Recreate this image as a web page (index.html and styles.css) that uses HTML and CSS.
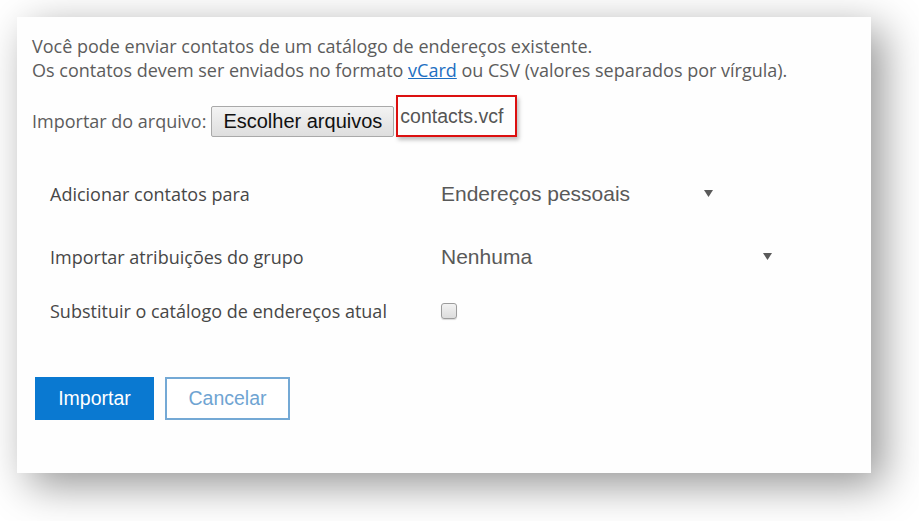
FILE: index.html
```html
<!DOCTYPE html>
<html lang="pt">
<head>
<meta charset="utf-8">
<title>Importar contatos</title>
<link rel="stylesheet" href="styles.css">
</head>
<body>
<div class="card">
  <p class="intro">Você pode enviar contatos de um catálogo de endereços existente.<br>Os contatos devem ser enviados no formato <a href="#" class="link">vCard</a> ou CSV (valores separados por vírgula).</p>
  <div class="file-row">
    <span class="file-label">Importar do arquivo:</span>
    <button class="file-btn" type="button">Escolher arquivos</button>
    <span class="file-name">contacts.vcf</span>
  </div>
  <div class="form">
    <div class="form-row row-first">
      <span class="label">Adicionar contatos para</span>
      <div class="select select-a"><span>Endereços pessoais</span><svg class="arrow" width="9" height="7" viewBox="0 0 9 7"><path d="M0 0H9L4.5 7Z" fill="#5a5a5a"/></svg></div>
    </div>
    <div class="form-row">
      <span class="label">Importar atribuições do grupo</span>
      <div class="select select-b"><span>Nenhuma</span><svg class="arrow" width="9" height="7" viewBox="0 0 9 7"><path d="M0 0H9L4.5 7Z" fill="#5a5a5a"/></svg></div>
    </div>
    <div class="form-row">
      <span class="label">Substituir o catálogo de endereços atual</span>
      <span class="check"></span>
    </div>
  </div>
  <div class="actions">
    <button class="btn btn-primary" type="button">Importar</button>
    <button class="btn btn-secondary" type="button">Cancelar</button>
  </div>
</div>
</body>
</html>
```
FILE: styles.css
```css
html, body {
  margin: 0;
  padding: 0;
  background: #ffffff;
}
html {
  height: 100%;
}
body {
  box-sizing: border-box;
  min-height: 100%;
  padding: 17px;
}
.card {
  box-sizing: border-box;
  width: 854px;
  height: 456px;
  background: #fefefe;
  padding: 17px 15px 0 15px;
  box-shadow: 12px 12px 40px rgba(0, 0, 0, 0.42);
  font-family: "Open Sans", sans-serif;
}
.intro {
  margin: 0;
  font-size: 18px;
  line-height: 24px;
  color: #5c5c5c;
}
.link {
  color: #1d6fc2;
  text-decoration: underline;
}
.file-row {
  margin-top: 13px;
  display: flex;
  align-items: flex-end;
}
.file-label {
  font-size: 18px;
  line-height: 24px;
  color: #5c5c5c;
  margin-bottom: 4px;
  margin-right: 5px;
}
.file-btn {
  box-sizing: border-box;
  width: 183px;
  height: 31px;
  padding: 0;
  margin: 0;
  font-family: "Liberation Sans", Arial, sans-serif;
  font-size: 20px;
  color: #111;
  background: linear-gradient(#f3f3f3, #dedede);
  border: 1px solid #a9a9a9;
  border-radius: 2px;
}
.file-name {
  margin-left: 2px;
  font-family: "Liberation Sans", Arial, sans-serif;
  font-size: 19.5px;
  line-height: 22px;
  color: #555;
  padding: 8px 12px 8px 2px;
  border: 2px solid #dc1010;
  box-shadow: 2px 3px 4px rgba(0, 0, 0, 0.25);
}
.form {
  margin-top: 45px;
  margin-left: 18px;
  display: flex;
  flex-direction: column;
  gap: 30px;
}
.form-row {
  display: flex;
  align-items: flex-start;
}
.row-first {
  padding-bottom: 9px;
}
.label {
  width: 391px;
  font-size: 18px;
  line-height: 24px;
  color: #474747;
}
.select {
  display: flex;
  justify-content: space-between;
  align-items: flex-start;
  font-family: "Liberation Sans", Arial, sans-serif;
  font-size: 21px;
  line-height: 24px;
  color: #595959;
}
.select-a {
  width: 272px;
}
.select-b {
  width: 331px;
}
.arrow {
  margin-top: 8px;
}
.check {
  box-sizing: border-box;
  width: 16px;
  height: 16px;
  margin-top: 4px;
  border: 1px solid #9c9c9c;
  border-radius: 3px;
  background: linear-gradient(#f2f2f2, #dcdcdc);
  box-shadow: 0 1px 1px rgba(0, 0, 0, 0.15);
}
.actions {
  margin-top: 54px;
  margin-left: 3px;
  display: flex;
  gap: 11px;
}
.btn {
  box-sizing: border-box;
  height: 43px;
  margin: 0;
  padding: 0;
  font-family: "Liberation Sans", Arial, sans-serif;
  font-size: 19.5px;
  cursor: pointer;
}
.btn-primary {
  width: 119px;
  background: #0a79d1;
  color: #ffffff;
  border: none;
}
.btn-secondary {
  width: 125px;
  background: #ffffff;
  color: #6fa4d2;
  border: 2px solid #74a9d5;
}
```
